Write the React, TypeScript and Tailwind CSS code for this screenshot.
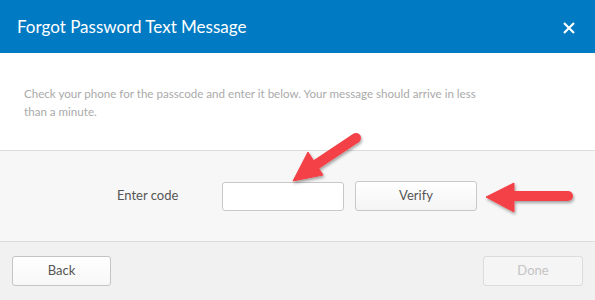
const Arrows = () => (
  <svg
    className="pointer-events-none absolute inset-0"
    width="595"
    height="300"
    viewBox="0 0 595 300"
  >
    <defs>
      <filter id="sh" x="-20%" y="-20%" width="140%" height="140%">
        <feDropShadow dx="1" dy="2" stdDeviation="1.5" floodColor="#000" floodOpacity="0.35" />
      </filter>
    </defs>
    <g filter="url(#sh)" fill="#f44147" stroke="#f44147">
      <line x1="356" y1="138" x2="314" y2="166" strokeWidth="10" strokeLinecap="round" />
      <polygon points="293,181 308,152 323,175" strokeWidth="1" strokeLinejoin="round" />
      <line x1="568" y1="196" x2="508" y2="196" strokeWidth="10" strokeLinecap="round" />
      <polygon points="486,197 514,183 514,212" strokeWidth="1" strokeLinejoin="round" />
    </g>
  </svg>
);

export default function App() {
  return (
    <div className="relative h-[300px] w-[595px] overflow-hidden font-['Lato',sans-serif]">
      {/* Header */}
      <div className="flex h-[53px] items-center justify-between bg-[#007ac2] pl-[17px] pr-[20px]">
        <h1 className="text-[17px] text-white">Forgot Password Text Message</h1>
        <svg width="12" height="12" viewBox="0 0 12 12" className="mt-[2px]">
          <path d="M1 1L11 11M11 1L1 11" stroke="#fff" strokeWidth="2.2" />
        </svg>
      </div>

      {/* Message */}
      <div className="h-[97px] bg-white px-[24px] pt-[32px]">
        <p className="text-[11.6px] leading-[18px] text-[#aaaaaa]">
          Check your phone for the passcode and enter it below. Your message should arrive in less
          <br />
          than a minute.
        </p>
      </div>

      {/* Code entry */}
      <div className="flex h-[92px] items-center border-y border-[#dcdcdc] bg-[#f7f7f7] pl-[117px]">
        <span className="w-[105px] text-[13px] text-[#555]">Enter code</span>
        <input
          type="text"
          className="h-[29px] w-[122px] rounded-[3px] border border-[#c8c8c8] bg-white"
        />
        <button className="ml-[11px] h-[30px] w-[122px] rounded-[3px] border border-[#c8c8c8] bg-gradient-to-b from-white to-[#f4f4f4] text-[13px] text-[#555]">
          Verify
        </button>
      </div>

      {/* Footer */}
      <div className="flex h-[58px] items-center justify-between bg-[#f1f1f1] px-[12px] pb-[1px]">
        <button className="h-[30px] w-[99px] rounded-[3px] border border-[#c4c4c4] bg-gradient-to-b from-white to-[#f7f7f7] text-[13px] text-[#555]">
          Back
        </button>
        <button className="h-[30px] w-[100px] rounded-[3px] border border-[#dcdcdc] bg-[#f5f5f5] text-[13px] text-[#c4c4c4]">
          Done
        </button>
      </div>

      <Arrows />
    </div>
  );
}
